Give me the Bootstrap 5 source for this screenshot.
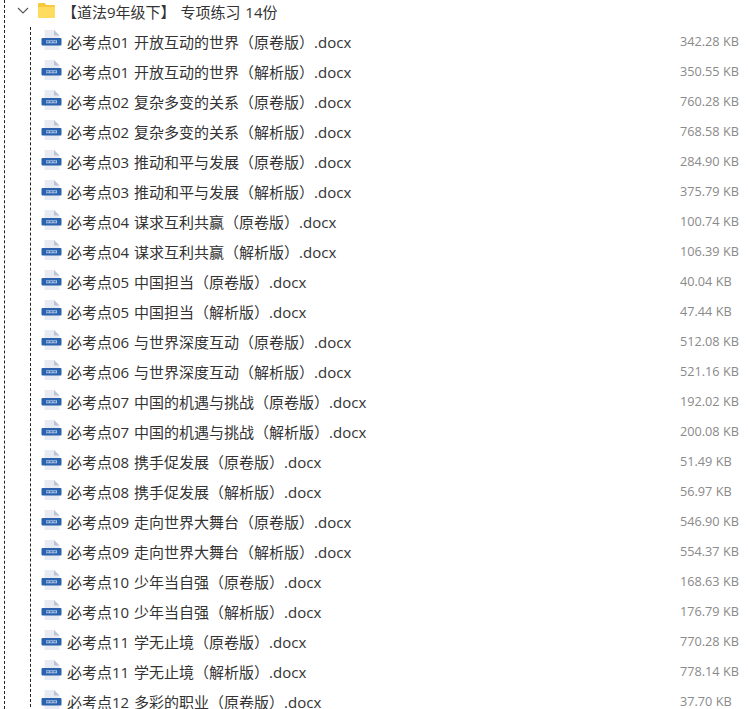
<!DOCTYPE html>
<html lang="zh-CN">
<head>
    <meta charset="UTF-8">
    <meta name="viewport" content="width=device-width, initial-scale=1.0">
    <title>专项练习</title>
    <link rel="stylesheet" href="https://cdn.jsdelivr.net/npm/bootstrap@5.3.0/dist/css/bootstrap.min.css">
    <style>
        html, body { height: 709px; overflow: hidden; background: #fff; }
        body { font-family: "Open Sans", "Noto Sans CJK SC", sans-serif; font-size: 15px; color: #333; word-spacing: 1px; }
        .tree-root { border-left: 1px dashed #222; margin-left: 4px; height: 709px; }
        .folder-row { height: 24px; padding-left: 12px; }
        .folder-row .arrow { width: 12px; margin: 0 8px 3px 0; }
        .folder-row .folder-icon { margin-bottom: 4px; }
        .folder-row .name { margin-left: 6px; }
        .tree-files { border-left: 1px dashed #222; margin: 3px 0 0 25px; }
        .file-row { height: 30px; padding-left: 10px; }
        .file-row svg { margin-bottom: 4px; }
        .file-row .name { margin-left: 5px; white-space: nowrap; }
        .file-size { position: absolute; left: 680px; color: #8a8a8a; font-size: 12.7px; word-spacing: 0; }
    </style>
</head>
<body>

<svg width="0" height="0" class="d-block">
    <symbol id="docIcon" viewBox="0 0 21 22">
        <path d="M3.500 1h9.500l5.500 5.500V21h-15z" fill="#e8ebf2"/>
        <path d="M13 1l5.500 5.500H13z" fill="#bcc3d2"/>
        <rect x="0.500" y="9" width="20" height="7.500" rx="1" fill="#2a62ae"/>
        <rect x="5" y="11.300" width="11" height="3" fill="#a9c2e6"/>
        <path d="M5.500 12.800h10" stroke="#2a62ae" stroke-width="1" stroke-dasharray="2.500 1"/>
    </symbol>
</svg>

<div class="tree-root">
    <div class="folder-row d-flex align-items-center">
        <svg class="arrow" width="12" height="8" viewBox="0 0 12 8"><path d="M1 1l5 5 5-5" fill="none" stroke="#555" stroke-width="1.100"/></svg>
        <svg class="folder-icon" width="19" height="17" viewBox="0 0 19 17"><path d="M1 2q0-1 1-1h5.500l2 2H17q1 0 1 1v11q0 1-1 1H2q-1 0-1-1z" fill="#f8c93e"/><path d="M1 5h17v10q0 1-1 1H2q-1 0-1-1z" fill="#ffdc60"/></svg>
        <span class="name">【道法9年级下】 专项练习 14份</span>
    </div>
    <div class="tree-files" id="files"></div>
</div>

<script>
    // [name, size]
    const files = [
        ['必考点01 开放互动的世界（原卷版）.docx', '342.28 KB'],
        ['必考点01 开放互动的世界（解析版）.docx', '350.55 KB'],
        ['必考点02 复杂多变的关系（原卷版）.docx', '760.28 KB'],
        ['必考点02 复杂多变的关系（解析版）.docx', '768.58 KB'],
        ['必考点03 推动和平与发展（原卷版）.docx', '284.90 KB'],
        ['必考点03 推动和平与发展（解析版）.docx', '375.79 KB'],
        ['必考点04 谋求互利共赢（原卷版）.docx', '100.74 KB'],
        ['必考点04 谋求互利共赢（解析版）.docx', '106.39 KB'],
        ['必考点05 中国担当（原卷版）.docx', '40.04 KB'],
        ['必考点05 中国担当（解析版）.docx', '47.44 KB'],
        ['必考点06 与世界深度互动（原卷版）.docx', '512.08 KB'],
        ['必考点06 与世界深度互动（解析版）.docx', '521.16 KB'],
        ['必考点07 中国的机遇与挑战（原卷版）.docx', '192.02 KB'],
        ['必考点07 中国的机遇与挑战（解析版）.docx', '200.08 KB'],
        ['必考点08 携手促发展（原卷版）.docx', '51.49 KB'],
        ['必考点08 携手促发展（解析版）.docx', '56.97 KB'],
        ['必考点09 走向世界大舞台（原卷版）.docx', '546.90 KB'],
        ['必考点09 走向世界大舞台（解析版）.docx', '554.37 KB'],
        ['必考点10 少年当自强（原卷版）.docx', '168.63 KB'],
        ['必考点10 少年当自强（解析版）.docx', '176.79 KB'],
        ['必考点11 学无止境（原卷版）.docx', '770.28 KB'],
        ['必考点11 学无止境（解析版）.docx', '778.14 KB'],
        ['必考点12 多彩的职业（原卷版）.docx', '37.70 KB']
    ];

    document.getElementById('files').innerHTML = files.map(f => `
        <div class="file-row d-flex align-items-center">
            <svg width="21" height="22"><use href="#docIcon"/></svg>
            <span class="name">${f[0]}</span>
            <span class="file-size">${f[1]}</span>
        </div>`).join('');
</script>
<script src="https://cdn.jsdelivr.net/npm/bootstrap@5.3.0/dist/js/bootstrap.bundle.min.js"></script>
</body>
</html>
